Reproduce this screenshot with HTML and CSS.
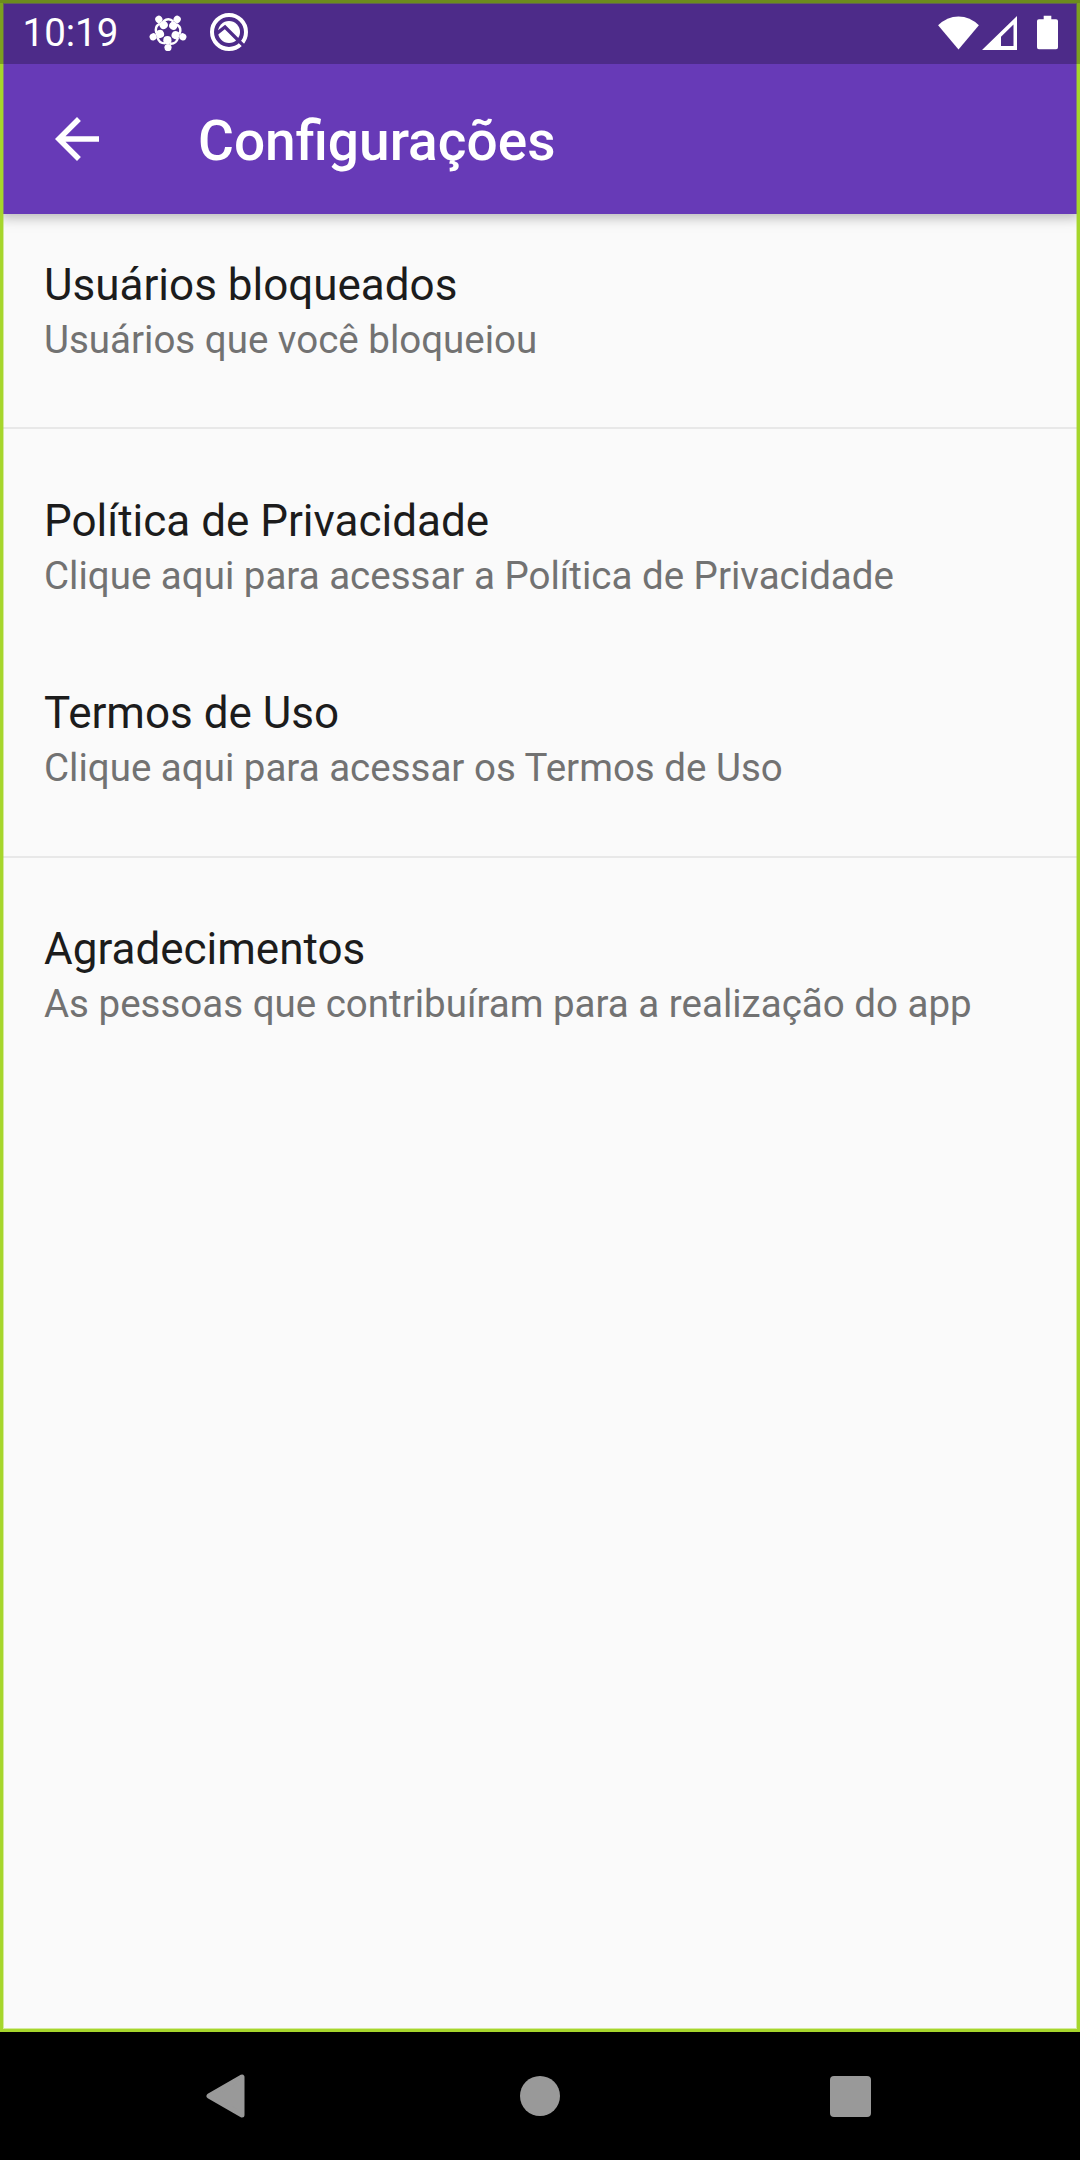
FILE: index.html
```html
<!DOCTYPE html>
<html lang="pt-BR">
<head>
<meta charset="utf-8">
<title>Configurações</title>
<link rel="stylesheet" href="styles.css">
</head>
<body>
<div class="app">
  <div class="status">
    <span class="clock">10:19</span>
    <svg class="people" width="38" height="38" viewBox="-19 -19 38 38">
      <defs>
        <g id="person">
          <circle cx="0" cy="15.6" r="3.6"/>
          <circle cx="-.6" cy="8.2" r="4.1"/>
          <path d="M1.6 11.6 Q8 12.4 10 6" fill="none" stroke="#fff" stroke-width="2.4"/>
        </g>
      </defs>
      <g fill="#fff">
        <use href="#person"/>
        <use href="#person" transform="rotate(72)"/>
        <use href="#person" transform="rotate(144)"/>
        <use href="#person" transform="rotate(216)"/>
        <use href="#person" transform="rotate(288)"/>
      </g>
    </svg>
    <svg class="beta" width="40" height="40" viewBox="-20 -20 40 40">
      <circle r="17" fill="none" stroke="#fff" stroke-width="4"/>
      <circle r="11" fill="#fff"/>
      <path d="M-12.5 1.6 L-4 -5 L15.6 14.6" fill="none" stroke="#4e2b89" stroke-width="3.4"/>
    </svg>
    <span class="signals">
      <svg width="41" height="34" viewBox="0 0 42 35"><path d="M0 9.6 Q9 .4 21 .4 T42 9.6 L21 34.4 Z" fill="#fff"/></svg>
      <svg class="cell" width="35" height="34" viewBox="0 0 35 34"><path fill-rule="evenodd" d="M0 34 L35 0 V34 Z M31.5 8.6 L19 20.8 V30 H31.5 Z" fill="#fff"/></svg>
      <svg class="battery" width="21" height="35" viewBox="0 0 22 35"><path d="M7 0 H15 V3.5 H20 Q22 3.5 22 5.5 V33 Q22 35 20 35 H2 Q0 35 0 33 V5.5 Q0 3.5 2 3.5 H7 Z" fill="#fff"/></svg>
    </span>
  </div>
  <header class="bar">
    <svg class="back" width="44" height="44" viewBox="4 4 16 16"><path d="M20 11H7.83l5.59-5.59L12 4l-8 8 8 8 1.41-1.41L7.83 13H20v-2z" fill="#fff"/></svg>
    <h1 class="heading">Configurações</h1>
  </header>
  <main class="list">
    <section class="group">
      <div class="item"><div class="title">Usuários bloqueados</div><div class="sub">Usuários que você bloqueiou</div></div>
    </section>
    <section class="group">
      <div class="item"><div class="title">Política de Privacidade</div><div class="sub">Clique aqui para acessar a Política de Privacidade</div></div>
      <div class="item"><div class="title">Termos de Uso</div><div class="sub">Clique aqui para acessar os Termos de Uso</div></div>
    </section>
    <section class="group">
      <div class="item"><div class="title">Agradecimentos</div><div class="sub">As pessoas que contribuíram para a realização do app</div></div>
    </section>
  </main>
</div>
<nav class="nav">
  <svg class="nav-back" width="39" height="44" viewBox="0 0 39 44"><path d="M36 3 V41 L3 22 Z" fill="#999" stroke="#999" stroke-width="5" stroke-linejoin="round"/></svg>
  <span class="nav-home"></span>
  <span class="nav-recent"></span>
</nav>
</body>
</html>
```
FILE: styles.css
```css
* { box-sizing: border-box; }
body {
  margin: 0;
  width: 1080px;
  height: 2160px;
  display: flex;
  flex-direction: column;
  background: #000;
  font-family: Roboto, sans-serif;
  overflow: hidden;
}
.app {
  position: relative;
  height: 2032px;
  background: #fafafa;
}
.app::after {
  content: "";
  position: absolute;
  inset: 0;
  z-index: 1;
  pointer-events: none;
  box-shadow: inset 0 0 0 3px #a6d62c, inset 0 0 0 4px rgba(166, 214, 44, 0.45);
}
.status {
  position: absolute;
  inset: 0 0 auto;
  z-index: 2;
  height: 64px;
  display: flex;
  align-items: center;
  padding: 0 22px 0 22.5px;
  background: rgba(0, 0, 0, 0.25);
  box-shadow: inset 0 3px rgba(0, 0, 0, 0.12);
  color: #fff;
}
.clock { width: 126.5px; font-size: 38.5px; line-height: 64px; padding-top: 2px; }
.people { flex: none; }
.beta { flex: none; margin-left: 22px; }
.signals { margin-left: auto; display: flex; align-items: flex-end; }
.cell { margin-left: 3px; }
.battery { margin-left: 20px; }
.bar {
  height: 214px;
  padding: 64px 0 0 55px;
  display: flex;
  align-items: center;
  background: #673ab7;
  color: #fff;
  box-shadow: 0 2px 11px rgba(0, 0, 0, 0.2), 0 6px 14px rgba(0, 0, 0, 0.1);
}
.heading { margin: 3px 0 0 99px; font-size: 55px; font-weight: 500; }
.list { padding-top: 21px; }
.group + .group { border-top: 2px solid #e8e8e8; padding-top: 41.5px; }
.item { height: 192.5px; padding: 22px 44px; }
.group:first-child .item { height: 192px; }
.title { font-size: 44px; line-height: 56px; color: #1c1c1c; white-space: nowrap; }
.sub { font-size: 38.5px; line-height: 54px; color: #727272; white-space: nowrap; }
.nav {
  height: 128px;
  display: grid;
  grid-template-columns: 206px 308px 310px auto;
  align-items: center;
}
.nav-back { grid-column: 2; }
.nav-home { margin-left: 6px; width: 40px; height: 40px; border-radius: 50%; background: #999; }
.nav-recent { margin-left: 6px; width: 41px; height: 41px; border-radius: 4px; background: #999; }
```
